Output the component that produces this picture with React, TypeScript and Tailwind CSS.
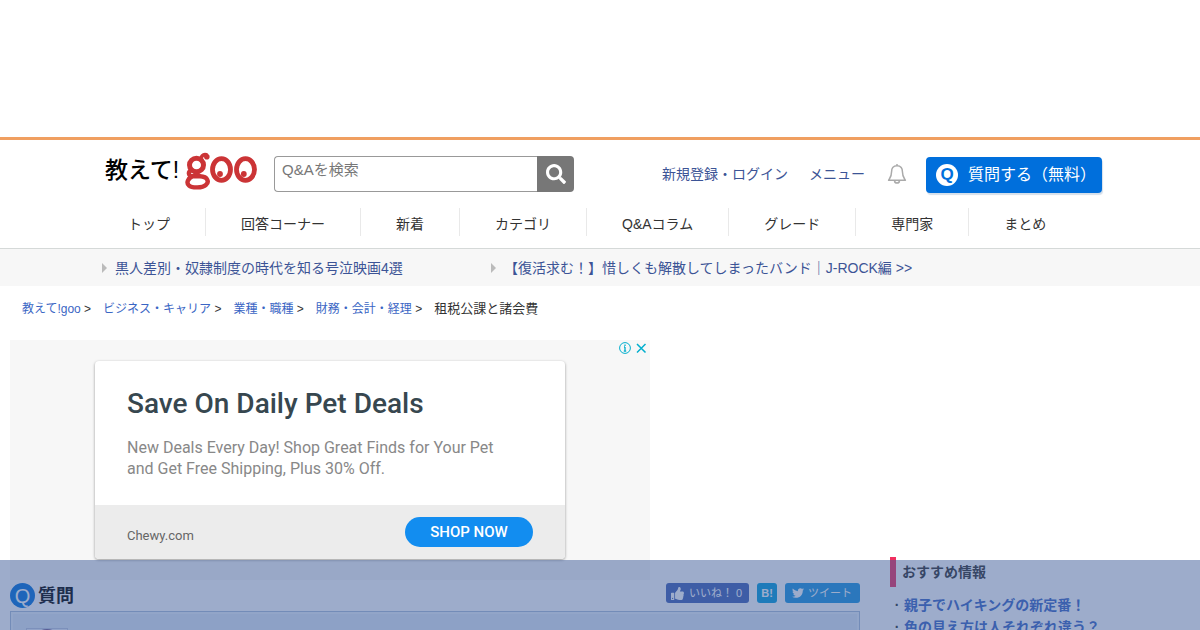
import React from "react";
import { FaSearch, FaThumbsUp, FaTwitter } from "react-icons/fa";

const navItems = ["トップ", "回答コーナー", "新着", "カテゴリ", "Q&Aコラム", "グレード", "専門家", "まとめ"];

const pickups = [
  "黒人差別・奴隷制度の時代を知る号泣映画4選",
  "【復活求む！】惜しくも解散してしまったバンド｜J-ROCK編 >>",
];

const crumbs = ["教えて!goo", "ビジネス・キャリア", "業種・職種", "財務・会計・経理"];

const recommended = ["親子でハイキングの新定番！", "色の見え方は人それぞれ違う？"];

function GooMark() {
  return (
    <svg viewBox="0 0 72 38" className="h-[38px] w-[72px]" fill="none" stroke="#cb3436" aria-hidden="true">
      <ellipse cx="11.500" cy="13" rx="7" ry="6.800" strokeWidth="5" />
      <path d="M16.500 8.500C15.500 4 18 2 21.500 2.800" strokeWidth="3.600" strokeLinecap="round" />
      <circle cx="21.800" cy="4.800" r="2.800" fill="#cb3436" stroke="none" />
      <path d="M6 18.500C3 20 3 23.800 7.500 24.300H15C23.500 24.600 24 30.500 21 32.800C17.500 36.200 7 36.200 3.800 33.300C1 30.500 3 26.500 7.500 24.300" strokeWidth="4.400" />
      <ellipse cx="36.500" cy="17.500" rx="9" ry="10.800" strokeWidth="4.800" />
      <ellipse cx="60.500" cy="17.500" rx="9" ry="10.800" strokeWidth="4.800" />
      <circle cx="35" cy="22" r="2.900" fill="#cb3436" stroke="none" />
      <circle cx="58.800" cy="22" r="2.900" fill="#cb3436" stroke="none" />
    </svg>
  );
}

function Bell() {
  return (
    <svg viewBox="0 0 20 22" className="h-[22px] w-5" fill="none" stroke="#aaa" strokeWidth="1.500" aria-hidden="true">
      <path d="M10 1v2M10 2.800C6 2.800 4.600 5.600 4.600 8.500C4.600 13.500 3.300 14.500 1.600 17.300H18.400C16.700 14.500 15.400 13.500 15.400 8.500C15.400 5.600 14 2.800 10 2.800Z" strokeLinejoin="round" />
      <path d="M7.500 18C8 20.800 12 20.800 12.500 18" />
    </svg>
  );
}

function Header() {
  return (
    <header className="border-t-[3px] border-[#f09f60]">
      <div className="mx-auto flex max-w-[1000px] items-start pt-3">
        <a href="#top" aria-label="教えて!goo" className="ml-[5px] flex items-start text-black">
          <span className="w-20 pt-[2px] text-[23px] leading-8 font-medium whitespace-nowrap">教えて!</span>
          <GooMark />
        </a>
        <form className="mt-1 ml-[17px] flex h-9 w-[300px]" onSubmit={(e) => e.preventDefault()}>
          <input
            type="text"
            aria-label="Q&Aを検索"
            placeholder="Q&Aを検索"
            className="min-w-0 flex-1 rounded-l border border-r-0 border-[#999] px-[7px] pb-2 text-[15px] outline-none placeholder:text-[#777]"
          />
          <button aria-label="検索" className="flex w-[37px] items-center justify-center rounded-r bg-[#777] text-white">
            <FaSearch size={20} />
          </button>
        </form>
        <div className="mt-1 ml-auto flex h-9 items-center text-sm text-[#3c5496]">
          <a href="#login">新規登録・ログイン</a>
          <a href="#menu" className="ml-[21px]">メニュー</a>
          <button aria-label="お知らせ" className="ml-[22px]"><Bell /></button>
        </div>
        <a href="#ask" className="mt-[5px] mr-[-2px] ml-[19px] flex h-9 w-[176px] items-center gap-[10px] rounded bg-[#006fdc] pl-[10px] text-base whitespace-nowrap text-white shadow-[1px_2px_1px_#d5dfea]">
          <span className="flex size-[22px] items-center justify-center rounded-full bg-white text-[17px] font-bold text-[#006fdc]">Q</span>
          質問する（無料）
        </a>
      </div>
      <nav className="mx-auto mt-[15px] flex h-10 max-w-[1000px] text-sm text-[#333]">
        {navItems.map((t) => (
          <a key={t} href="#nav" className="flex h-7 items-center border-r border-[#e9e9e9] px-[35px] pt-1 whitespace-nowrap first:pl-7 last:border-r-0">
            {t}
          </a>
        ))}
      </nav>
      <div className="border-t border-[#d5d9d8] bg-[#f7f7f7]">
        <ul className="mx-auto flex h-[37px] max-w-[1000px] items-center text-sm text-[#3c5496]">
          {pickups.map((t) => (
            <li key={t} className="w-[389px] whitespace-nowrap">
              <a href="#pickup" className="flex items-center gap-2 pl-[2px]">
                <span className="h-0 w-0 border-y-[5px] border-l-[5px] border-y-transparent border-l-[#bbb]" />
                {t}
              </a>
            </li>
          ))}
        </ul>
      </div>
    </header>
  );
}

function Ad() {
  return (
    <section className="relative max-w-[640px] bg-[#f7f7f7] px-[85px] pt-[21px] pb-[21px] font-[Roboto,sans-serif]">
      <div className="absolute top-0 right-0 flex h-4 items-center gap-1 pr-[3px]">
        <svg viewBox="0 0 12 12" className="size-3" fill="none" stroke="#00aecd" aria-hidden="true">
          <circle cx="6" cy="6" r="5.400" />
          <path d="M6 5v4.500M6 2.500v1.500M5 5h1M4.800 9.200h2.400" strokeWidth="1.300" />
        </svg>
        <button aria-label="閉じる">
          <svg viewBox="0 0 12 12" className="size-3" stroke="#00aecd" strokeWidth="1.500" aria-hidden="true">
            <path d="M2 2l8.500 8.500M10.500 2l-8.500 8.500" />
          </svg>
        </button>
      </div>
      <div className="overflow-hidden rounded bg-white shadow-[0_1px_3px_rgba(0,0,0,0.4)]">
        <div className="h-36 px-8 pt-[25px]">
          <h2 className="text-[28px] leading-9 font-medium text-[#37474f]">Save On Daily Pet Deals</h2>
          <p className="mt-[15px] text-base leading-[21px] text-[#888]">
            New Deals Every Day! Shop Great Finds for Your Pet
            <br />
            and Get Free Shipping, Plus 30% Off.
          </p>
        </div>
        <div className="flex h-[54px] items-center justify-between bg-[#ececec] px-8">
          <span className="pt-2 text-[13px] text-[#666]">Chewy.com</span>
          <a href="#shop" className="flex h-[30px] w-32 items-center justify-center rounded-full bg-[#128df0] text-[15px] font-medium text-white">SHOP NOW</a>
        </div>
      </div>
    </section>
  );
}

export default function App() {
  return (
    <div className="h-screen overflow-hidden bg-white pt-[137px] font-['Liberation_Sans','Noto_Sans_CJK_JP',sans-serif] text-[#333]">
      <Header />
      <nav aria-label="パンくず" className="flex items-center gap-3 pt-3 pl-[22px] text-xs leading-[22px]">
        {crumbs.map((c) => (
          <span key={c}>
            <a href="#crumb" className="text-[#3a66c4]">{c}</a> &gt;
          </span>
        ))}
        <span className="text-[13px]">租税公課と諸会費</span>
      </nav>
      <div className="mt-5 flex gap-[30px] px-[10px]">
        <main className="min-w-0 flex-1">
          <Ad />
          <div className="flex h-[31px] items-center">
            <span className="flex size-[25px] items-center justify-center rounded-full bg-[#0070dd] text-xl text-white">Q</span>
            <h1 className="ml-[3px] text-lg font-bold text-black">質問</h1>
            <div className="mb-[5px] ml-auto flex gap-2 text-[11px] text-white">
              <button className="flex h-5 w-[83px] items-center gap-[5px] rounded-[3px] bg-[#4060b5] pl-[5px] whitespace-nowrap"><FaThumbsUp size={13} />いいね！ 0</button>
              <button aria-label="はてなブックマーク" className="h-5 w-5 rounded-[3px] bg-[#009ddd] text-[11px] font-bold">B!</button>
              <button className="flex h-5 w-[75px] items-center gap-1 rounded-[3px] bg-[#1b95e0] pl-[7px] whitespace-nowrap"><FaTwitter size={12} />ツイート</button>
            </div>
          </div>
          <section className="h-40 border border-[#aabed8] bg-[#e9f0f9] p-[2px]">
            <div className="h-full bg-[#dfe9f4] px-[13px] pt-[14px]">
              <svg viewBox="0 0 42 42" className="size-[42px] border border-[#bcc6de] bg-[#e4eaf7]" aria-hidden="true">
                <ellipse cx="21" cy="9" rx="12" ry="9" fill="#755d91" />
              </svg>
            </div>
          </section>
        </main>
        <aside className="w-[300px] pt-[217px]">
          <h2 className="border-l-[6px] border-[#f03060] pl-[6px] text-sm leading-[30px] font-bold">おすすめ情報</h2>
          <ul className="mt-[7px] text-sm leading-[22px] font-bold">
            {recommended.map((t) => (
              <li key={t} className="whitespace-nowrap"><span className="inline-block w-[14px] text-center">·</span><a href="#info" className="text-[#3a66c4]">{t}</a></li>
            ))}
          </ul>
        </aside>
      </div>
      <div className="pointer-events-none fixed inset-x-0 bottom-0 h-[70px] bg-[#3b5998]/50" />
    </div>
  );
}
